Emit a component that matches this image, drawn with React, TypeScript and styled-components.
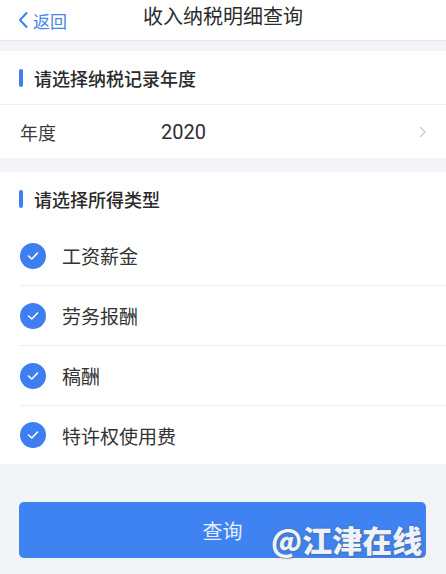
import React from "react";
import styled, { createGlobalStyle } from "styled-components";

const Global = createGlobalStyle`
  html, body { margin: 0; padding: 0; background: #f3f4f8; }
  body { font-family: "Noto Sans CJK SC", "Noto Sans", sans-serif; }
  * { box-sizing: border-box; }
`;

const Page = styled.div`
  width: 446px;
  height: 574px;
  background: #f3f4f8;
  position: relative;
  overflow: hidden;
`;

const Header = styled.header`
  height: 41px;
  background: #fff;
  border-bottom: 1px solid #e6e7ea;
  display: grid;
  grid-template-columns: 1fr auto 1fr;
  align-items: center;
`;

const Back = styled.div`
  display: flex;
  align-items: center;
  gap: 5px;
  padding-left: 18px;
  color: #4a84e8;
  font-size: 17px;
  line-height: 1;
`;

const Title = styled.h1`
  margin: 0;
  font-size: 20px;
  font-weight: 400;
  color: #2b2b2b;
  line-height: 1;
  padding-bottom: 8px;
`;

const Card = styled.section<{ $gap: number }>`
  background: #fff;
  margin-top: ${(p) => p.$gap}px;
`;

const SectionTitle = styled.div<{ $line?: boolean }>`
  height: 54px;
  display: flex;
  align-items: center;
  gap: 11px;
  padding-left: 19px;
  font-size: 18px;
  font-weight: 500;
  color: #2a2a2a;
  border-bottom: ${(p) => (p.$line ? "1px solid #eeeff2" : "none")};
`;

const Bar = styled.span`
  width: 4px;
  height: 18px;
  border-radius: 2px;
  background: #3d7ff0;
`;

const YearRow = styled.div`
  height: 53px;
  display: flex;
  align-items: center;
  padding: 0 20px;
  font-size: 18px;
  color: #3a3a3a;
`;

const Label = styled.span`
  width: 141px;
`;

const Value = styled.span`
  flex: 1;
  font-family: Roboto, "Noto Sans", sans-serif;
  font-size: 20px;
  color: #2e2e2e;
`;

const Option = styled.div<{ $last?: boolean }>`
  height: ${(p) => (p.$last ? 58 : 60)}px;
  margin-left: 20px;
  display: flex;
  align-items: center;
  gap: 16px;
  font-size: 19px;
  color: #333;
  border-bottom: ${(p) => (p.$last ? "none" : "1px solid #eeeff2")};
`;

const Check = styled.span`
  width: 26px;
  height: 26px;
  border-radius: 50%;
  background: #3d7ff0;
  display: flex;
  align-items: center;
  justify-content: center;
`;

const Button = styled.button`
  display: flex;
  align-items: center;
  justify-content: center;
  width: 407px;
  height: 56px;
  margin: 38px 0 0 19px;
  border: none;
  border-radius: 5px;
  background: #3f82f1;
  color: #e9effc;
  font-family: inherit;
  font-size: 20px;
  padding: 0;
`;

const Watermark = styled.div`
  position: absolute;
  left: 271px;
  top: 524px;
  font-size: 30px;
  font-weight: 900;
  color: #eef3fb;
  line-height: 1;
  text-shadow: 0 0 2px rgba(90, 100, 120, 0.6), 1px 1px 1px rgba(90, 100, 120, 0.5);
`;

const options = ["工资薪金", "劳务报酬", "稿酬", "特许权使用费"];

export default function App() {
  return (
    <Page>
      <Global />
      <Header>
        <Back>
          <svg width="10" height="16" viewBox="0 0 10 16">
            <path d="M8.5 1 L2 8 L8.5 15" fill="none" stroke="#3d7ff0" strokeWidth="2" strokeLinecap="round" strokeLinejoin="round" />
          </svg>
          <span>返回</span>
        </Back>
        <Title>收入纳税明细查询</Title>
        <span />
      </Header>
      <Card $gap={10}>
        <SectionTitle $line>
          <Bar />
          请选择纳税记录年度
        </SectionTitle>
        <YearRow>
          <Label>年度</Label>
          <Value>2020</Value>
          <svg width="7" height="12" viewBox="0 0 7 12">
            <path d="M1 1 L6 6 L1 11" fill="none" stroke="#c8c9cc" strokeWidth="1.3" />
          </svg>
        </YearRow>
      </Card>
      <Card $gap={14}>
        <SectionTitle>
          <Bar />
          请选择所得类型
        </SectionTitle>
        {options.map((o, i) => (
          <Option key={o} $last={i === options.length - 1}>
            <Check>
              <svg width="12" height="10" viewBox="0 0 12 10">
                <path d="M1.5 5 L4.8 8 L10.5 2" fill="none" stroke="#fff" strokeWidth="1.6" strokeLinecap="round" strokeLinejoin="round" />
              </svg>
            </Check>
            {o}
          </Option>
        ))}
      </Card>
      <Button>查询</Button>
      <Watermark>@江津在线</Watermark>
    </Page>
  );
}
